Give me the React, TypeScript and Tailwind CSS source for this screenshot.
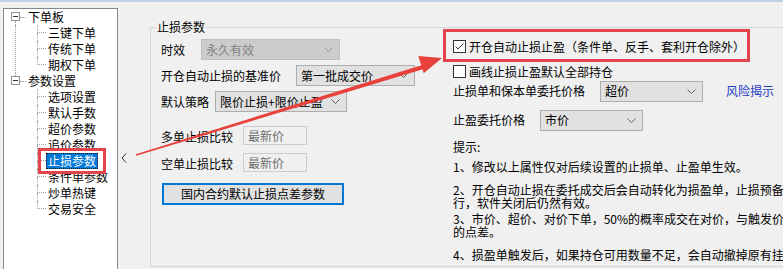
import clsx from 'clsx';

const treeGroups = [
  { label: '下单板', items: ['三键下单', '传统下单', '期权下单'] },
  {
    label: '参数设置',
    items: ['选项设置', '默认手数', '超价参数', '追价参数', '止损参数', '条件单参数', '炒单热键', '交易安全'],
  },
];

const SELECTED = '止损参数';

function Chevron({ color = '#606060' }: { color?: string }) {
  return (
    <svg width="9" height="5" viewBox="0 0 9 5" className="shrink-0">
      <polyline points="0.5,0.5 4.5,4.5 8.5,0.5" fill="none" stroke={color} strokeWidth="1" />
    </svg>
  );
}

interface SelectProps {
  value: string;
  disabled?: boolean;
  className?: string;
}

/** Windows-style combo box. */
function Select({ value, disabled, className }: SelectProps) {
  return (
    <div
      className={clsx(
        'flex h-[21px] items-center justify-between border pl-[4px] pr-[6px]',
        disabled ? 'border-[#bfbfbf] bg-[#cccccc] text-[#838383]' : 'border-[#adadad] bg-[#e1e1e1] text-black',
        className,
      )}
    >
      <span className="leading-[16px]">{value}</span>
      <Chevron color={disabled ? '#9a9a9a' : '#606060'} />
    </div>
  );
}

function TextBox({ value }: { value: string }) {
  return (
    <div className="ml-[10px] flex h-[19px] w-[64px] items-center border border-[#cccccc] bg-[#f0f0f0] pl-[4px] text-[#6d6d6d]">
      <span className="leading-[16px]">{value}</span>
    </div>
  );
}

function Checkbox({ checked }: { checked?: boolean }) {
  return (
    <div className="flex h-[13px] w-[13px] shrink-0 items-center justify-center border border-[#333333] bg-white">
      {checked && (
        <svg width="11" height="11" viewBox="0 0 11 11">
          <polyline points="1.5,5.5 4,8 9.5,2.5" fill="none" stroke="#333333" strokeWidth="1" />
        </svg>
      )}
    </div>
  );
}

function Tree() {
  const last = treeGroups.length - 1;
  return (
    <div className="ml-[3px] mt-[6px] h-[300px] w-[115px] shrink-0 border border-[#828790] bg-white">
      {treeGroups.map((group, gi) => (
        <div key={group.label}>
          <div className="flex h-4 items-center">
            <div className="ml-[7px] flex w-[9px] flex-col items-center self-stretch">
              <div className={gi > 0 ? 'h-[3px] w-0 border-l border-dotted border-[#a0a0a0]' : 'h-[3px]'} />
              <div className="flex h-[9px] w-[9px] items-center justify-center border border-[#919191] bg-white">
                <div className="h-px w-[5px] bg-[#333333]" />
              </div>
              <div className={gi < last ? 'h-[4px] w-0 border-l border-dotted border-[#a0a0a0]' : 'h-[4px]'} />
            </div>
            <div className="h-0 w-[6px] border-t border-dotted border-[#a0a0a0]" />
            <span className="ml-[2px] leading-[16px]">{group.label}</span>
          </div>
          <div
            className={
              gi < last
                ? 'ml-[11px] border-l border-dotted border-[#a0a0a0]'
                : 'ml-[11px] border-l border-transparent'
            }
          >
            <div className="ml-[21px]">
              {group.items.map((item, ii) => {
                const isLast = ii === group.items.length - 1;
                const selected = item === SELECTED;
                return (
                  <div key={item} className="flex h-4 items-center">
                    <div className="flex w-[9px] flex-col self-stretch">
                      <div className="h-2 border-b border-l border-dotted border-[#a0a0a0]" />
                      <div className={isLast ? 'h-2' : 'h-2 border-l border-dotted border-[#a0a0a0]'} />
                    </div>
                    <span
                      className={clsx(
                        'whitespace-nowrap border px-[1px] leading-[14px]',
                        selected
                          ? 'border-dotted border-[#1b1b1b] bg-[#0078d7] text-white'
                          : 'border-transparent',
                      )}
                    >
                      {item}
                    </span>
                  </div>
                );
              })}
            </div>
          </div>
        </div>
      ))}
    </div>
  );
}

const hints: string[][] = [
  ['1、修改以上属性仅对后续设置的止损单、止盈单生效。'],
  ['2、开仓自动止损在委托成交后会自动转化为损盈单，止损预备单在服务器端执', '行，软件关闭后仍然有效。'],
  ['3、市价、超价、对价下单，50%的概率成交在对价，与触发价格之间存在一定', '的点差。'],
  ['4、损盈单触发后，如果持仓可用数量不足，会自动撤掉原有挂单。'],
];

export default function App() {
  return (
    <div className="relative h-[269px] w-[783px] overflow-hidden bg-[#f0f0f0] font-['Noto_Sans_CJK_SC',sans-serif] text-[12px] text-black">
      <div className="h-[2px] bg-[#bcd0e6]" />
      <div className="flex">
        <Tree />

        <div className="w-[32px] shrink-0 pl-[3px] pt-[151px]">
          <svg width="6" height="10" viewBox="0 0 6 10">
            <polyline points="5,0.5 1,5 5,9.5" fill="none" stroke="#333333" strokeWidth="1" />
          </svg>
        </div>

        <fieldset className="mt-[17px] h-[248px] w-[660px] shrink-0 border border-[#d5d5d5]">
          <legend className="ml-[5px] px-[1px] leading-[16px]">止损参数</legend>
          <div className="flex">
            <div className="flex w-[302px] shrink-0 flex-col pl-[10px] pt-[4px]">
              <div className="flex h-[21px] items-center">
                <span>时效</span>
                <Select value="永久有效" disabled className="ml-[16px] w-[139px]" />
              </div>
              <div className="mt-[5px] flex h-[21px] items-center">
                <span>开仓自动止损的基准价</span>
                <Select value="第一批成交价" className="ml-[15px] w-[119px]" />
              </div>
              <div className="mt-[5px] flex h-[21px] items-center">
                <span>默认策略</span>
                <Select value="限价止损+限价止盈" className="ml-[6px] w-[132px]" />
              </div>
              <div className="mt-[14px] flex h-[19px] items-center">
                <span className="pt-[2px]">多单止损比较</span>
                <TextBox value="最新价" />
              </div>
              <div className="mt-[8px] flex h-[19px] items-center">
                <span className="pt-[2px]">空单止损比较</span>
                <TextBox value="最新价" />
              </div>
              <button className="ml-[1px] mt-[11px] flex h-[22px] w-[182px] items-center justify-center border-2 border-[#0078d7] bg-[#e1e1e1] leading-[16px]">
                国内合约默认止损点差参数
              </button>
            </div>

            <div className="flex flex-col pt-[5px]">
              <div className="flex h-[13px] items-center">
                <Checkbox checked />
                <span className="ml-[3px] whitespace-nowrap leading-[16px]">开仓自动止损止盈（条件单、反手、套利开仓除外）</span>
              </div>
              <div className="mt-[12px] flex h-[13px] items-center">
                <Checkbox />
                <span className="ml-[3px] whitespace-nowrap leading-[16px]">画线止损止盈默认全部持仓</span>
              </div>
              <div className="mt-[3px] flex h-[20px] items-center">
                <span className="whitespace-nowrap">止损单和保本单委托价格</span>
                <Select value="超价" className="ml-[15px] h-[20px] w-[103px]" />
                <span className="ml-[23px] whitespace-nowrap text-[#1a3cc0]">风险揭示</span>
              </div>
              <div className="mt-[9px] flex h-[20px] items-center">
                <span className="whitespace-nowrap">止盈委托价格</span>
                <Select value="市价" className="ml-[15px] h-[20px] w-[103px]" />
              </div>
              <div className="mt-[10px] leading-[13px]">提示:</div>
              {hints.map((lines, i) => (
                <div key={i} className={clsx('leading-[13px]', i === 0 ? 'mt-[7px]' : i === 2 ? 'mt-[3px]' : 'mt-[10px]')}>
                  {lines.map((line) => (
                    <div key={line} className="whitespace-nowrap">
                      {line}
                    </div>
                  ))}
                </div>
              ))}
            </div>
          </div>
        </fieldset>
      </div>

      {/* red annotation overlays */}
      <div className="pointer-events-none absolute left-[38px] top-[148px] h-[26px] w-[68px] border-[3px] border-[#e3434a]" />
      <div className="pointer-events-none absolute left-[443px] top-[29px] h-[33px] w-[307px] border-[3px] border-[#e3434a]" />
      <svg className="pointer-events-none absolute left-0 top-0" width="783" height="269" viewBox="0 0 783 269">
        <polygon points="135.8,154.2 422.3,64.9 423.7,69.1 136.2,155.8" fill="#e8413c" />
        <polygon points="442,58 423.7,73.2 418.3,56" fill="#e8413c" />
      </svg>
    </div>
  );
}
